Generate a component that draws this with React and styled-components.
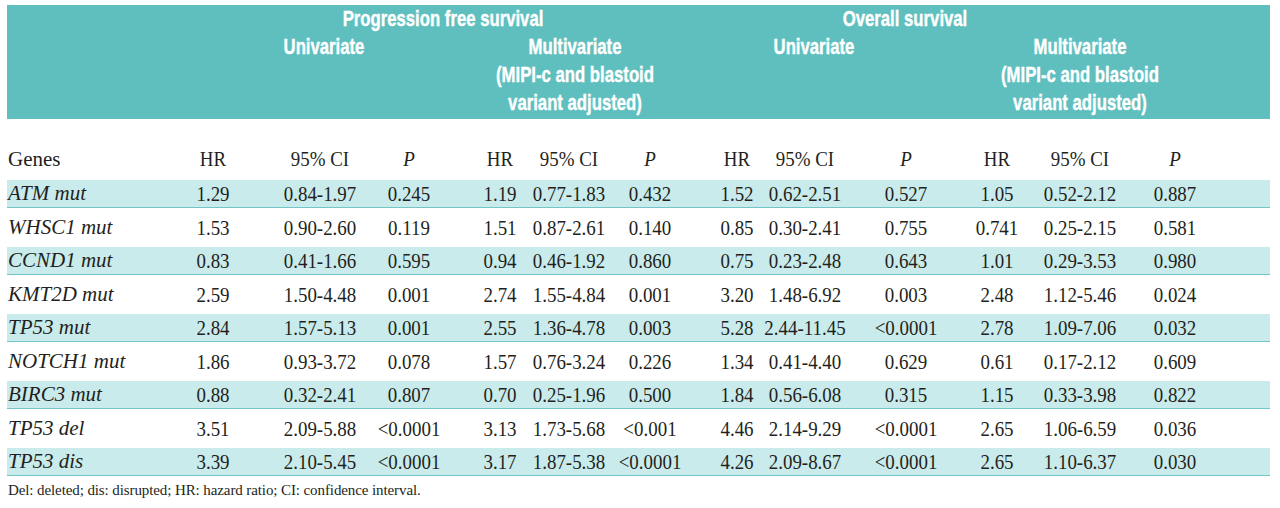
import styled, { createGlobalStyle } from "styled-components";

const GlobalStyle = createGlobalStyle`
  html, body {
    margin: 0;
    background: #ffffff;
  }
`;

const COLS = "138px 136px 78px 100px 82px 56px 106px 68px 68px 134px 48px 118px 72px 1fr";

const Page = styled.div`
  width: 1280px;
  box-sizing: border-box;
  padding: 5px 10px 0 7px;
  color: #231f20;
  font-family: "Liberation Serif", "Times New Roman", serif;
`;

const HeadBand = styled.div`
  background: #5fbfbe;
  color: #ffffff;
  font-family: "Liberation Sans", Arial, sans-serif;
  font-weight: 700;
  font-size: 22px;
  line-height: 28px;
  padding-bottom: 2px;
  -webkit-text-stroke: 0.4px #ffffff;
`;

const GroupRow = styled.div`
  display: grid;
  grid-template-columns: 193px 486px 438px 1fr;
`;

const SubRow = styled.div`
  display: grid;
  grid-template-columns: 185px 264px 238px 240px 292px 1fr;
`;

// condensed face is not installed, so squeeze the bold sans
const HeadCell = styled.div`
  text-align: center;
  white-space: nowrap;
  transform: scaleX(0.76);
`;

const Row = styled.div`
  display: grid;
  grid-template-columns: ${COLS};
  align-items: center;
  height: ${(p) => (p.$tint ? "27px" : p.$head ? "42px" : "39px")};
  background: ${(p) => (p.$tint ? "#c9ebeb" : "transparent")};
  border-bottom: ${(p) => (p.$tint ? "1px solid #72c6c5" : "none")};
  margin-top: ${(p) => (p.$head ? "19px" : "0")};
  font-size: 22px;
`;

const Cell = styled.div`
  display: flex;
  justify-content: center;
  white-space: nowrap;
  font-style: ${(p) => (p.$italic ? "italic" : "normal")};
  transform: scaleX(0.86);
`;

const NameCell = styled.div`
  padding-left: 1px;
  white-space: nowrap;
  font-size: 21px;
  font-style: ${(p) => (p.$italic ? "italic" : "normal")};
`;

const Note = styled.p`
  margin: 5px 0 0 1px;
  font-size: 15px;
  line-height: 18px;
  letter-spacing: -0.1px;
`;

const rows = [
  ["ATM mut", "1.29", "0.84-1.97", "0.245", "1.19", "0.77-1.83", "0.432", "1.52", "0.62-2.51", "0.527", "1.05", "0.52-2.12", "0.887"],
  ["WHSC1 mut", "1.53", "0.90-2.60", "0.119", "1.51", "0.87-2.61", "0.140", "0.85", "0.30-2.41", "0.755", "0.741", "0.25-2.15", "0.581"],
  ["CCND1 mut", "0.83", "0.41-1.66", "0.595", "0.94", "0.46-1.92", "0.860", "0.75", "0.23-2.48", "0.643", "1.01", "0.29-3.53", "0.980"],
  ["KMT2D mut", "2.59", "1.50-4.48", "0.001", "2.74", "1.55-4.84", "0.001", "3.20", "1.48-6.92", "0.003", "2.48", "1.12-5.46", "0.024"],
  ["TP53 mut", "2.84", "1.57-5.13", "0.001", "2.55", "1.36-4.78", "0.003", "5.28", "2.44-11.45", "<0.0001", "2.78", "1.09-7.06", "0.032"],
  ["NOTCH1 mut", "1.86", "0.93-3.72", "0.078", "1.57", "0.76-3.24", "0.226", "1.34", "0.41-4.40", "0.629", "0.61", "0.17-2.12", "0.609"],
  ["BIRC3 mut", "0.88", "0.32-2.41", "0.807", "0.70", "0.25-1.96", "0.500", "1.84", "0.56-6.08", "0.315", "1.15", "0.33-3.98", "0.822"],
  ["TP53 del", "3.51", "2.09-5.88", "<0.0001", "3.13", "1.73-5.68", "<0.001", "4.46", "2.14-9.29", "<0.0001", "2.65", "1.06-6.59", "0.036"],
  ["TP53 dis", "3.39", "2.10-5.45", "<0.0001", "3.17", "1.87-5.38", "<0.0001", "4.26", "2.09-8.67", "<0.0001", "2.65", "1.10-6.37", "0.030"],
];

const statHeads = ["HR", "95% CI", "P"];

export default function App() {
  return (
    <Page>
      <GlobalStyle />
      <HeadBand>
        <GroupRow>
          <span />
          <HeadCell>Progression free survival</HeadCell>
          <HeadCell>Overall survival</HeadCell>
        </GroupRow>
        <SubRow>
          <span />
          <HeadCell>Univariate</HeadCell>
          <HeadCell>
            Multivariate
            <br />
            (MIPI-c and blastoid
            <br />
            variant adjusted)
          </HeadCell>
          <HeadCell>Univariate</HeadCell>
          <HeadCell>
            Multivariate
            <br />
            (MIPI-c and blastoid
            <br />
            variant adjusted)
          </HeadCell>
        </SubRow>
      </HeadBand>

      <Row $head>
        <NameCell>Genes</NameCell>
        {[0, 1, 2, 3].map((g) =>
          statHeads.map((h) => (
            <Cell key={`${g}-${h}`} $italic={h === "P"}>
              {h}
            </Cell>
          ))
        )}
      </Row>

      {rows.map((r, i) => (
        <Row key={r[0]} $tint={i % 2 === 0}>
          <NameCell $italic>{r[0]}</NameCell>
          {r.slice(1).map((v, j) => (
            <Cell key={j}>{v}</Cell>
          ))}
        </Row>
      ))}

      <Note>Del: deleted; dis: disrupted; HR: hazard ratio; CI: confidence interval.</Note>
    </Page>
  );
}
